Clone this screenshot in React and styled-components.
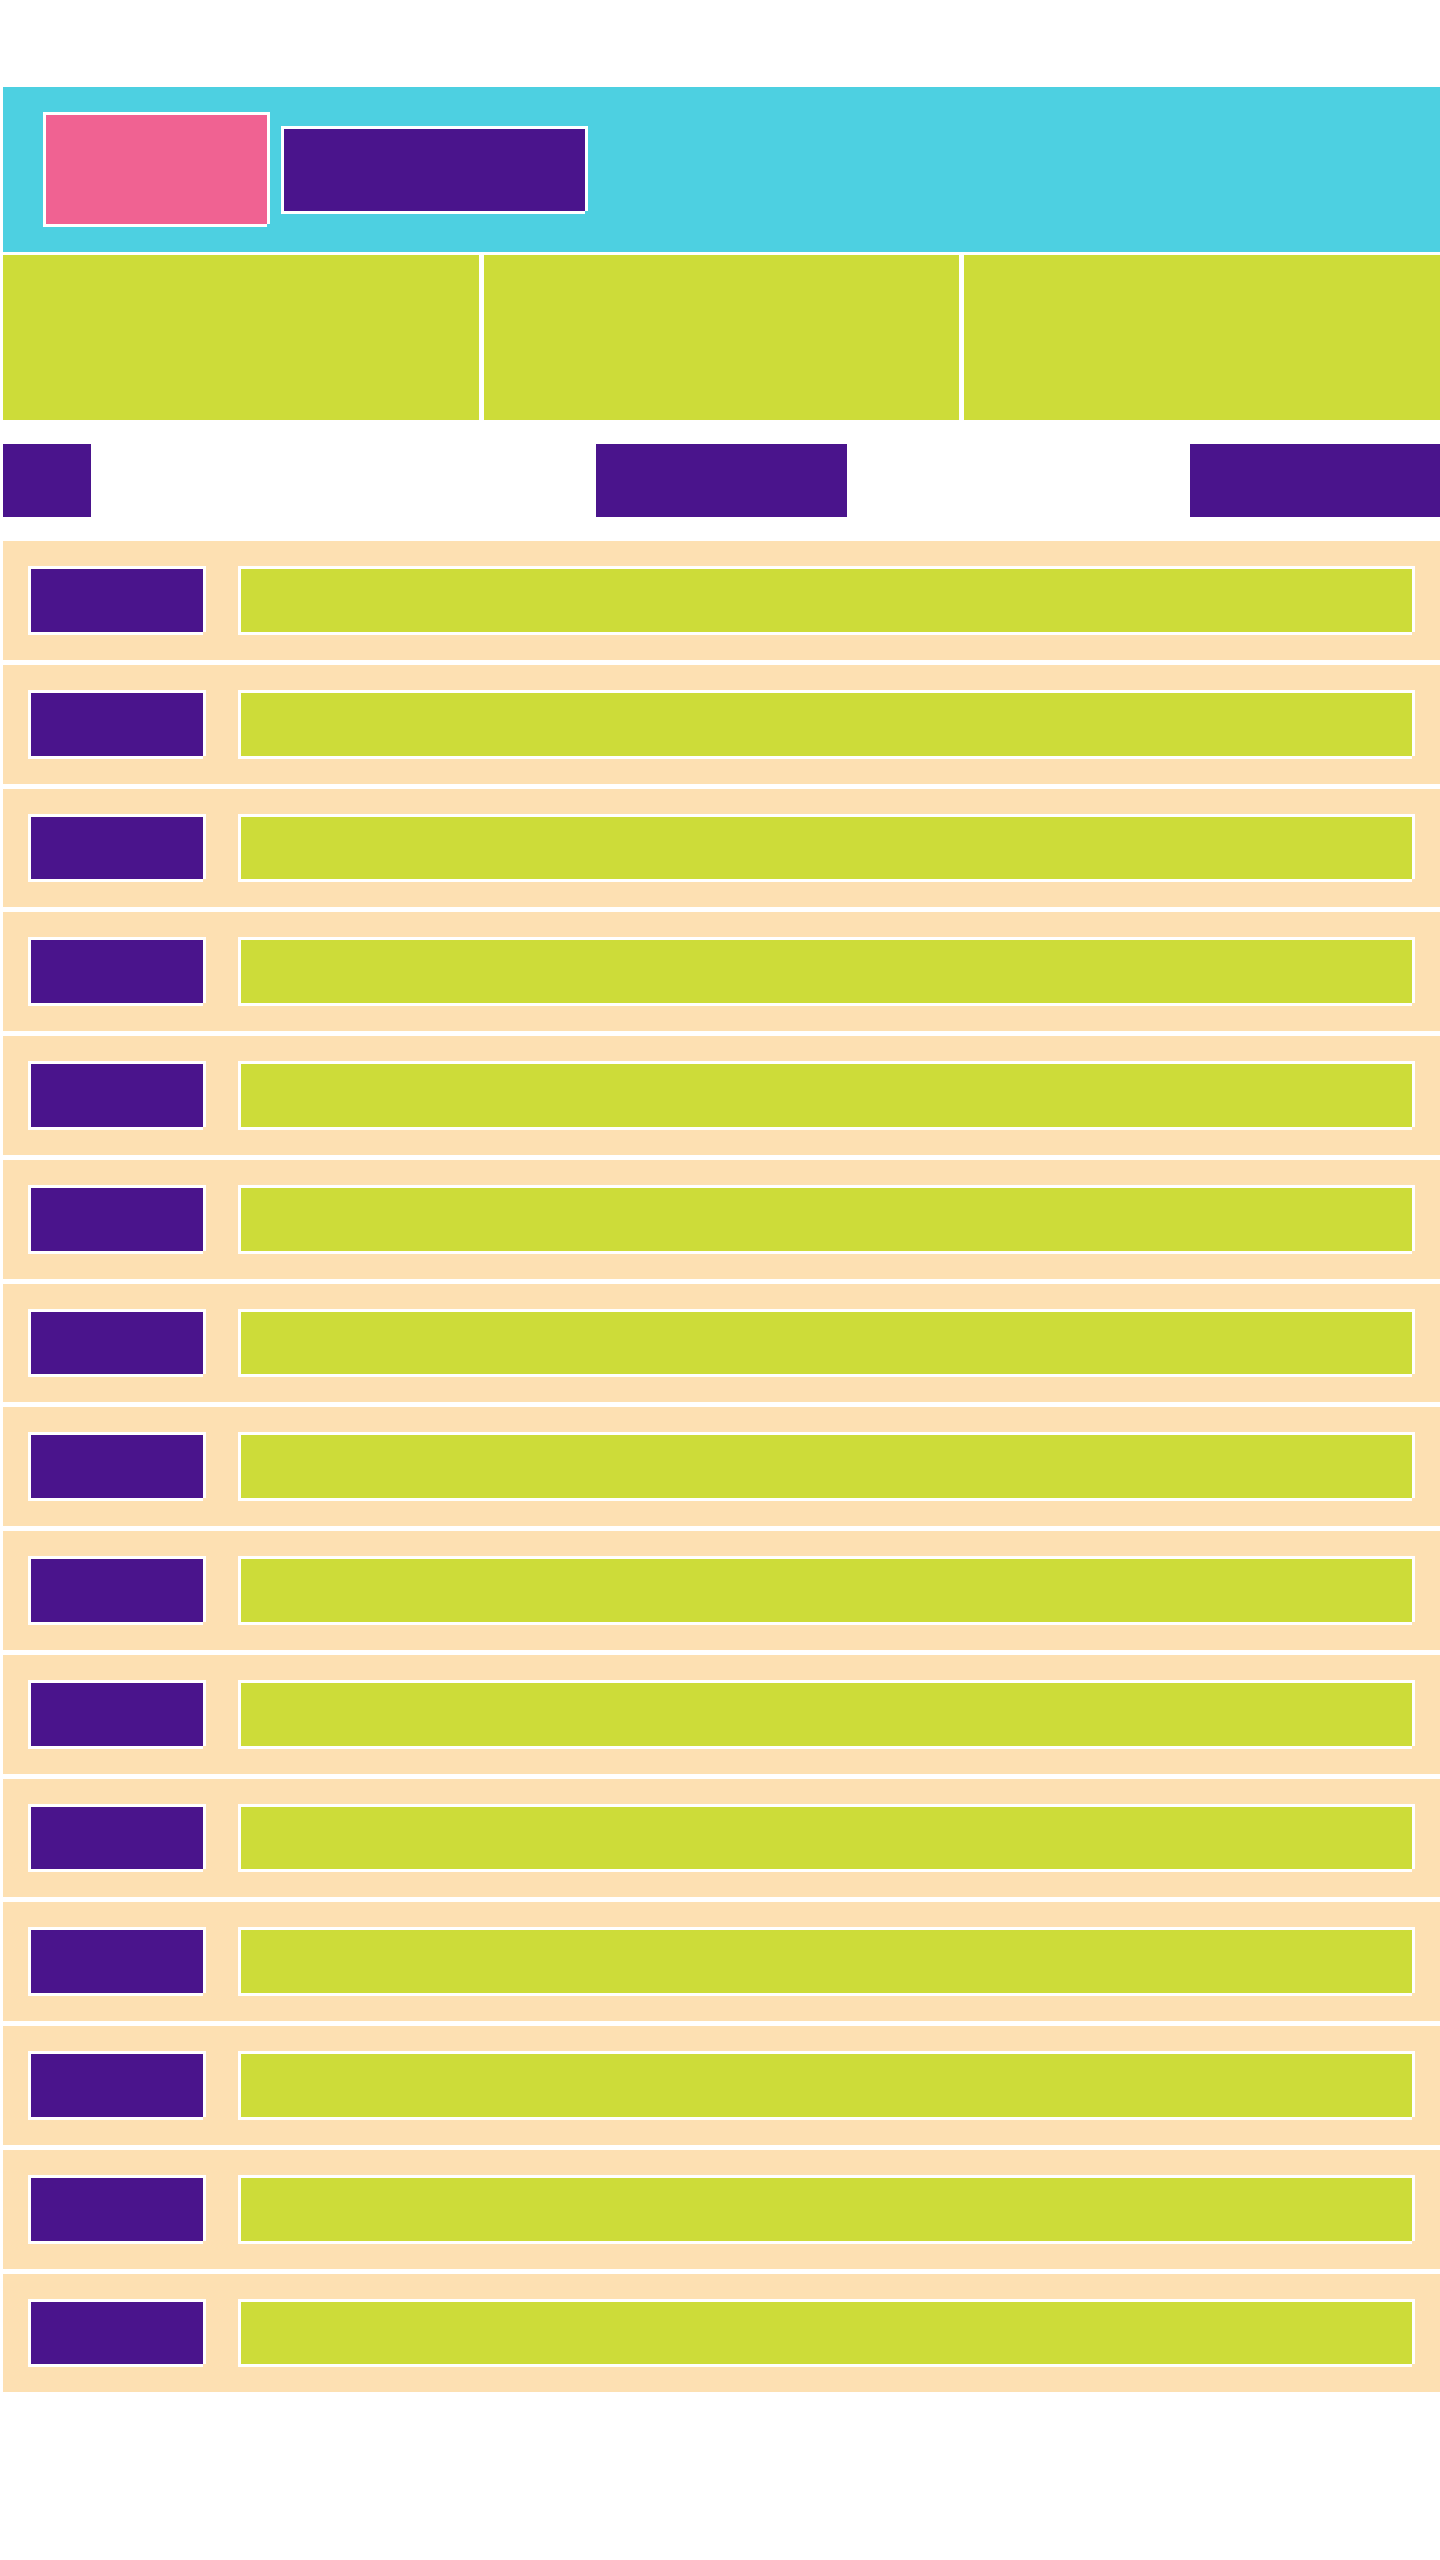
import React from "react";
import styled, { createGlobalStyle } from "styled-components";

const GlobalStyle = createGlobalStyle`
  body {
    margin: 0;
    background: #ffffff;
    font-family: "Liberation Sans", Arial, sans-serif;
  }
`;

const Page = styled.div`
  padding: 87px 0 0 3px;
  display: flex;
  flex-direction: column;
`;

/* white frame with the bottom-right corner left open */
const frame = `
  box-shadow: -3px -3px 0 #fff, 3px -3px 0 #fff, -3px 3px 0 #fff,
    3px 0 0 #fff, 0 3px 0 #fff;
`;

const Header = styled.header`
  height: 165px;
  background: #4dd0e1;
  display: flex;
  align-items: center;
  gap: 17px;
  padding-left: 43px;
`;

const Logo = styled.div`
  width: 221px;
  height: 109px;
  background: #f06292;
  ${frame}
`;

const Brand = styled.div`
  width: 301px;
  height: 82px;
  background: #4a148c;
  ${frame}
`;

const Banner = styled.section`
  margin-top: 3px;
  display: grid;
  grid-template-columns: repeat(3, 1fr);
  gap: 5px;
`;

const Panel = styled.div`
  height: 165px;
  background: #cddc39;
`;

const Nav = styled.nav`
  margin: 24px 0;
  display: grid;
  grid-template-columns: repeat(3, 1fr);
`;

const NavItem = styled.div`
  height: 73px;
  width: ${(p) => p.$w}px;
  background: #4a148c;
  justify-self: ${(p) => p.$align};
`;

const List = styled.div`
  display: flex;
  flex-direction: column;
  gap: 5px;
`;

const Row = styled.div`
  background: #fde0b2;
  padding: 28px;
  display: flex;
  gap: 38px;
`;

const Tag = styled.div`
  width: 172px;
  height: 62.75px;
  background: #4a148c;
  ${frame}
`;

const Bar = styled.div`
  flex: 1;
  height: 62.75px;
  background: #cddc39;
  ${frame}
`;

const NAV = [
  { w: 88, align: "start" },
  { w: 251, align: "center" },
  { w: 250, align: "end" },
];

const App = () => {
  return (
    <>
      <GlobalStyle />
      <Page>
        <Header>
          <Logo />
          <Brand />
        </Header>

        <Banner>
          <Panel />
          <Panel />
          <Panel />
        </Banner>

        <Nav>
          {NAV.map((item, i) => (
            <NavItem key={i} $w={item.w} $align={item.align} />
          ))}
        </Nav>

        <List>
          {Array.from({ length: 15 }).map((_, i) => (
            <Row key={i}>
              <Tag />
              <Bar />
            </Row>
          ))}
        </List>
      </Page>
    </>
  );
};

export default App;
